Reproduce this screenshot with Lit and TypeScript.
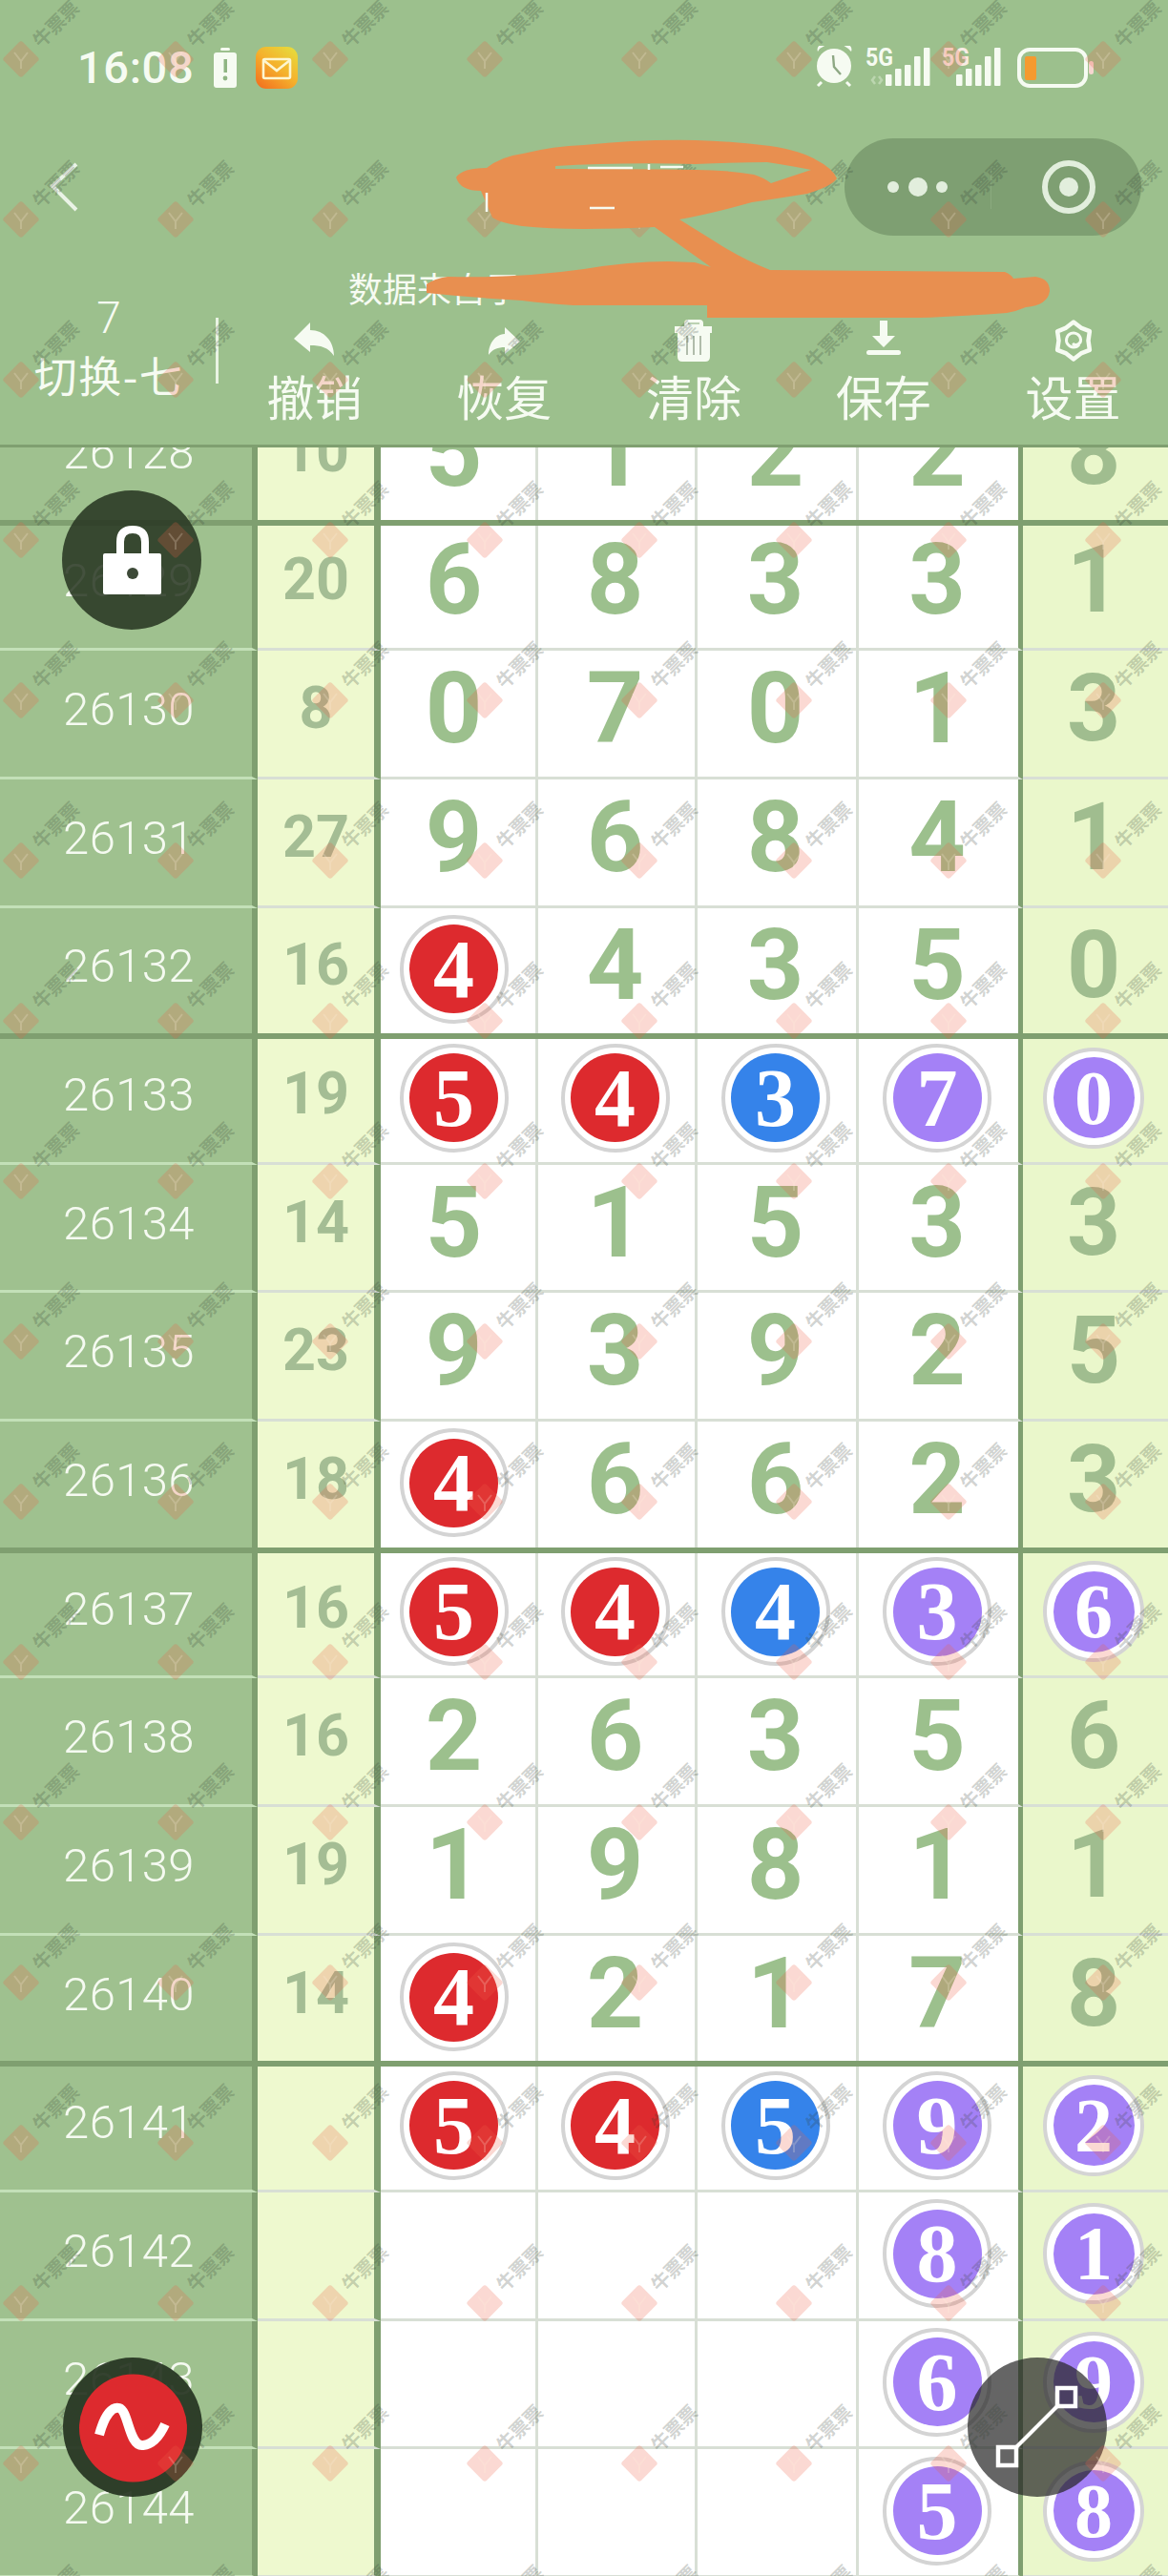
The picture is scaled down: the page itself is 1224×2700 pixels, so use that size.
import { LitElement, html, css, svg } from "lit";
import { customElement } from "lit/decorators.js";

type Ball = { v: number; c: "r" | "b" | "p" };
type Cell = number | Ball | null;
const r = (v: number): Ball => ({ v, c: "r" });
const b = (v: number): Ball => ({ v, c: "b" });
const p = (v: number): Ball => ({ v, c: "p" });

const ROWS: { id: number; sum: number | null; d: Cell[]; thick?: boolean }[] = [
  { id: 26128, sum: 10, d: [5, 1, 2, 2, 8], thick: true },
  { id: 26129, sum: 20, d: [6, 8, 3, 3, 1] },
  { id: 26130, sum: 8, d: [0, 7, 0, 1, 3] },
  { id: 26131, sum: 27, d: [9, 6, 8, 4, 1] },
  { id: 26132, sum: 16, d: [r(4), 4, 3, 5, 0], thick: true },
  { id: 26133, sum: 19, d: [r(5), r(4), b(3), p(7), p(0)] },
  { id: 26134, sum: 14, d: [5, 1, 5, 3, 3] },
  { id: 26135, sum: 23, d: [9, 3, 9, 2, 5] },
  { id: 26136, sum: 18, d: [r(4), 6, 6, 2, 3], thick: true },
  { id: 26137, sum: 16, d: [r(5), r(4), b(4), p(3), p(6)] },
  { id: 26138, sum: 16, d: [2, 6, 3, 5, 6] },
  { id: 26139, sum: 19, d: [1, 9, 8, 1, 1] },
  { id: 26140, sum: 14, d: [r(4), 2, 1, 7, 8], thick: true },
  { id: 26141, sum: null, d: [r(5), r(4), b(5), p(9), p(2)] },
  { id: 26142, sum: null, d: [null, null, null, p(8), p(1)] },
  { id: 26143, sum: null, d: [null, null, null, p(6), p(9)] },
  { id: 26144, sum: null, d: [null, null, null, p(5), p(8)] },
];

const bars = (x: number) => {
  const tops = [79, 73, 69, 60, 51];
  return tops.map(
    (t, i) => svg`<rect x=${x + i * 10} y=${t - 49} width="6.5" height=${91 - t} rx="1" fill="#f6fbf2"/>`
  );
};

const gearPoints = () => {
  const pts: string[] = [];
  for (let i = 0; i < 12; i++) {
    const a = (Math.PI / 6) * i + Math.PI / 6;
    const rad = i % 2 === 0 ? 19.5 : 15.5;
    pts.push(`${(30 + rad * Math.cos(a)).toFixed(1)},${(23 + rad * Math.sin(a)).toFixed(1)}`);
  }
  return pts.join(" ");
};

@customElement("app-root")
export class AppRoot extends LitElement {
  static styles = css`
    :host {
      display: block;
      position: relative;
      width: 1224px;
      height: 2700px;
      overflow: hidden;
      background: #fff;
      font-family: Roboto, "Noto Sans CJK SC", sans-serif;
    }
    .header {
      height: 469px;
      box-sizing: border-box;
      background: #9cc08d;
      border-bottom: 3px solid #7f9f70;
      color: #f6fbf2;
      position: relative;
      z-index: 3;
    }
    .status {
      height: 44px;
      padding: 49px 0 0 81px;
      display: flex;
      align-items: center;
    }
    .time {
      font-size: 47px;
      font-weight: 500;
      line-height: 44px;
      letter-spacing: 0.6px;
      width: 143px;
    }
    .status-mail {
      margin-left: 20px;
    }
    .status-right {
      margin-left: 543px;
    }
    .nav {
      height: 102px;
      margin-top: 52px;
      padding: 0 28px 0 50px;
      display: flex;
      align-items: center;
      justify-content: space-between;
    }
    .capsule {
      width: 311px;
      height: 102px;
      border-radius: 51px;
      background: #7e9f72;
      display: block;
    }
    .sub {
      height: 70px;
      box-sizing: border-box;
      padding: 36px 0 0 365px;
      font-family: "Noto Sans CJK SC", sans-serif;
      font-size: 36px;
      line-height: 36px;
      white-space: nowrap;
    }
    .toolbar {
      display: flex;
      height: 147px;
    }
    .switch {
      width: 226px;
      flex: none;
      text-align: center;
      box-sizing: border-box;
      padding-left: 2px;
    }
    .switch .n {
      font-size: 46px;
      font-weight: 300;
      line-height: 33px;
      height: 33px;
    }
    .switch .t {
      font-family: "Noto Sans CJK SC", sans-serif;
      font-size: 45px;
      line-height: 46px;
      margin-top: 20px;
      letter-spacing: 1.5px;
      white-space: nowrap;
    }
    .divider {
      width: 3px;
      height: 69px;
      margin: 16px 1px 0 0;
      background: #e9f3e3;
      flex: none;
    }
    .tool {
      flex: 1;
      display: flex;
      flex-direction: column;
      align-items: center;
      padding-top: 17px;
    }
    .tool svg {
      display: block;
      height: 48px;
      width: 60px;
    }
    .tool span {
      font-family: "Noto Sans CJK SC", sans-serif;
      font-size: 50px;
      line-height: 56px;
      margin-top: 4px;
      white-space: nowrap;
    }
    .table {
      height: 2231px;
      overflow: hidden;
    }
    .rows {
      margin-top: -56px;
    }
    .row {
      display: grid;
      grid-template-columns: 270px 129px 165px 167px 169px 172px 152px;
      height: 134.65px;
      position: relative;
    }
    .row.thick::after {
      content: "";
      position: absolute;
      left: 0;
      right: 0;
      bottom: -3px;
      height: 6px;
      background: #7f9f70;
      z-index: 2;
    }
    .cell {
      box-sizing: border-box;
      display: flex;
      align-items: center;
      justify-content: center;
      border-bottom: 3px solid #d8dfd5;
      line-height: 1;
      min-width: 0;
    }
    .label {
      background: #9fc18f;
      color: #f5faf1;
      font-size: 49px;
      font-weight: 300;
      letter-spacing: 0.4px;
      border-right: 6px solid #7f9f70;
      border-bottom-color: #c3e0b8;
      padding: 0 0 9px 6px;
    }
    .sum {
      background: #eef9cf;
      color: #a4bd94;
      font-size: 61px;
      font-weight: 700;
      border-right: 7px solid #7f9f70;
      padding-bottom: 11px;
    }
    .d {
      background: #fff;
      color: #9cc08d;
      font-size: 104px;
      font-weight: 700;
      border-right: 3px solid #d8dfd5;
      padding: 0 3px 10px 0;
    }
    .d.first {
      padding-right: 9px;
    }
    .d.last {
      border-right: 5px solid #7f9f70;
    }
    .d.extra {
      background: #eaf7cb;
      color: #a0bd8f;
      font-size: 98px;
      border-right: 0;
      padding-right: 4px;
    }
    .cell.has-ball {
      padding-bottom: 3px;
    }
    .ball {
      width: 114px;
      height: 114px;
      box-sizing: border-box;
      border-radius: 50%;
      border: 4px solid #d4d4d4;
      background: #fff;
      display: flex;
      align-items: center;
      justify-content: center;
      flex: none;
    }
    .ball i {
      width: 93px;
      height: 93px;
      border-radius: 50%;
      display: flex;
      align-items: center;
      justify-content: center;
      font-family: "Liberation Serif", serif;
      font-style: normal;
      font-weight: 700;
      font-size: 86px;
      line-height: 1;
      color: #fff;
    }
    .extra .ball {
      width: 106px;
      height: 106px;
    }
    .extra .ball i {
      width: 85px;
      height: 85px;
      font-size: 80px;
    }
    .ball .r {
      background: #dd2a2e;
    }
    .ball .b {
      background: #3583ea;
    }
    .ball .p {
      background: #a481f6;
    }
    .fab {
      position: absolute;
      width: 146px;
      height: 146px;
      border-radius: 50%;
      z-index: 4;
    }
    .fab svg {
      display: block;
    }
    .lock {
      left: 65px;
      top: 514px;
      background: rgba(38, 52, 33, 0.86);
    }
    .wave {
      left: 66px;
      top: 2471px;
      background: rgba(38, 52, 33, 0.93);
    }
    .link {
      left: 1014px;
      top: 2471px;
      background: rgba(35, 35, 35, 0.7);
    }
    .marks {
      position: absolute;
      inset: 0;
      display: grid;
      grid-template-columns: repeat(8, 162px);
      grid-auto-rows: 168px;
      pointer-events: none;
      z-index: 5;
    }
    .mark {
      position: relative;
    }
    .mark svg {
      position: absolute;
      left: 0;
      top: 40px;
    }
    .mark span {
      position: absolute;
      left: 28px;
      top: 12px;
      width: 60px;
      text-align: center;
      font-family: "Noto Sans CJK SC", sans-serif;
      font-weight: 700;
      font-size: 20px;
      line-height: 26px;
      letter-spacing: -0.5px;
      color: rgba(50, 62, 50, 0.24);
      transform: rotate(-45deg);
      white-space: nowrap;
    }
    .scribble {
      position: absolute;
      left: 0;
      top: 0;
      z-index: 6;
      pointer-events: none;
    }
  `;

  private cell(c: Cell, i: number) {
    const cls = `cell d ${i === 0 ? "first" : ""} ${i === 3 ? "last" : ""} ${i === 4 ? "extra" : ""}`;
    if (c === null) return html`<div class=${cls}></div>`;
    if (typeof c === "number") return html`<div class=${cls}>${c}</div>`;
    return html`<div class="${cls} has-ball"><div class="ball"><i class=${c.c}>${c.v}</i></div></div>`;
  }

  render() {
    const marks = Array.from({ length: 8 * 17 });
    return html`
      <div class="header">
        <div class="status">
          <div class="time">16:08</div>
          <svg width="24" height="42" viewBox="0 0 24 42">
            <rect x="7" y="0" width="10" height="3" rx="1.5" fill="#f6fbf2" />
            <rect x="0" y="5" width="24" height="37" rx="3" fill="#f6fbf2" />
            <rect x="10.5" y="12" width="3.5" height="14" fill="#8fb583" />
            <circle cx="12" cy="32" r="2.4" fill="#8fb583" />
          </svg>
          <svg class="status-mail" width="44" height="44" viewBox="0 0 44 44">
            <defs>
              <linearGradient id="mailg" x1="0.9" y1="0" x2="0.1" y2="1">
                <stop offset="0" stop-color="#e6dc3c" />
                <stop offset="0.5" stop-color="#f5b02c" />
                <stop offset="1" stop-color="#f2701f" />
              </linearGradient>
            </defs>
            <rect width="44" height="44" rx="11" fill="url(#mailg)" />
            <rect x="8" y="13" width="28" height="20" rx="1.5" fill="none" stroke="#fdf6d0" stroke-width="2.6" />
            <path d="M8 14 L22 25 L36 14" fill="none" stroke="#fdf6d0" stroke-width="2.6" />
          </svg>
          <svg class="status-right" width="294" height="46" viewBox="0 0 294 46">
            <g transform="translate(-2,-2)">
              <path d="M6 5 L13 1 A6 6 0 0 0 4 8 Z M36 5 L30 1 A6 6 0 0 1 39 8 Z" fill="#f6fbf2" />
              <circle cx="21" cy="23" r="18" fill="#f6fbf2" />
              <path d="M8 40 L4 44 M34 40 L38 44" stroke="#f6fbf2" stroke-width="3" />
              <path d="M20 12 L21 24 L28 32" fill="none" stroke="#8ea884" stroke-width="2.4" />
            </g>
            <text x="52" y="21" font-family="Roboto, sans-serif" font-weight="700" font-size="26" textLength="29" lengthAdjust="spacingAndGlyphs" fill="#f6fbf2">5G</text>
            <path d="M62 32 l-3 4 l3 4 M66 32 l3 4 l-3 4" fill="none" stroke="#bcd6b0" stroke-width="2.5" />
            ${bars(73)}
            <text x="132" y="21" font-family="Roboto, sans-serif" font-weight="700" font-size="26" textLength="29" lengthAdjust="spacingAndGlyphs" fill="#f8ece4">5G</text>
            ${bars(147)}
            <rect x="213" y="4" width="70" height="38" rx="11" fill="none" stroke="#f6fbf2" stroke-width="4" />
            <rect x="219" y="11" width="12" height="25" rx="2" fill="#f59a2f" />
            <rect x="286" y="16" width="5" height="14" rx="2.5" fill="#f6d6d0" />
          </svg>
        </div>
        <div class="nav">
          <svg width="34" height="52" viewBox="0 0 34 52">
            <path d="M30 2 L5 25 L30 50" fill="none" stroke="#eaf3e6" stroke-width="4" />
          </svg>
          <svg class="capsule" width="311" height="102" viewBox="0 0 311 102">
            <circle cx="51" cy="51" r="6" fill="#e2eedd" />
            <circle cx="77" cy="51" r="10" fill="#e2eedd" />
            <circle cx="102" cy="51" r="6" fill="#e2eedd" />
            <path d="M153.500 30 V74" stroke="#8aa97e" stroke-width="1" />
            <circle cx="235" cy="51" r="25" fill="none" stroke="#e2eedd" stroke-width="6" />
            <circle cx="235" cy="51" r="10" fill="#e2eedd" />
          </svg>
        </div>
        <div class="sub">数据来自于</div>
        <div class="toolbar">
          <div class="switch">
            <div class="n">7</div>
            <div class="t">切换-七</div>
          </div>
          <div class="divider"></div>
          <div class="tool">
            <svg viewBox="0 0 60 48">
              <path d="M9 21 L26 4 L26 12 C41 12 51 24 51 39 C45 30 37 28 26 28 L26 35 Z" fill="#f6fbf2" />
            </svg>
            <span>撤销</span>
          </div>
          <div class="tool">
            <svg viewBox="0 0 60 48">
              <path d="M47 24 L31 9 L31 16 C19 17 14 28 14 38 C18 32 24 30 31 30 L31 37 Z" fill="#f6fbf2" />
            </svg>
            <span>恢复</span>
          </div>
          <div class="tool">
            <svg viewBox="0 0 60 48">
              <path d="M20 5 Q20 1 24 1 H36 Q40 1 40 5 V8 H49 V15 H47 V40 Q47 45 42 45 H18 Q13 45 13 40 V15 H10 V8 H20 Z" fill="#f6fbf2" />
              <path d="M24 5 H36" stroke="#a9c59c" stroke-width="1.500" />
              <path d="M23 18 V38 M30 18 V38 M37 18 V38" stroke="#a9b5a3" stroke-width="1.800" />
            </svg>
            <span>清除</span>
          </div>
          <div class="tool">
            <svg viewBox="0 0 60 48">
              <path d="M26 2 H34 V18 H42 L30 30 L18 18 H26 Z" fill="#f6fbf2" />
              <rect x="12" y="33" width="36" height="5" rx="2.500" fill="#f6fbf2" />
            </svg>
            <span>保存</span>
          </div>
          <div class="tool">
            <svg viewBox="0 0 60 48">
              <polygon points=${gearPoints()} fill="none" stroke="#f6fbf2" stroke-width="4.500" stroke-linejoin="round" />
              <path d="M36 27 A7.500 7.500 0 1 1 37.500 22 A5 5 0 0 1 29 26" fill="none" stroke="#f6fbf2" stroke-width="3" />
            </svg>
            <span>设置</span>
          </div>
        </div>
      </div>

      <div class="table">
        <div class="rows">
          ${ROWS.map(
            (row) => html`
              <div class="row ${row.thick ? "thick" : ""}">
                <div class="cell label">${row.id}</div>
                <div class="cell sum">${row.sum ?? ""}</div>
                ${row.d.map((c, i) => this.cell(c, i))}
              </div>
            `
          )}
        </div>
      </div>

      <div class="fab lock">
        <svg width="146" height="146" viewBox="0 0 146 146">
          <path d="M61 68 V54 Q61 41 74 41 Q87 41 87 54 V68" fill="none" stroke="#fff" stroke-width="8" />
          <rect x="43" y="66" width="61" height="43" rx="2" fill="#fff" />
          <circle cx="74" cy="87" r="6" fill="#3d4a38" />
        </svg>
      </div>
      <div class="fab wave">
        <svg width="146" height="146" viewBox="0 0 146 146">
          <circle cx="73.500" cy="74" r="56.500" fill="#dd2a2e" />
          <path d="M38 81 C44 59 52 51 59 53 C69 56 69 94 84 92 C94 91 102 81 107 70" fill="none" stroke="#fff" stroke-width="10" />
        </svg>
      </div>
      <div class="fab link">
        <svg width="146" height="146" viewBox="0 0 146 146">
          <rect x="32" y="94" width="19" height="19" fill="none" stroke="#fff" stroke-width="4.500" />
          <rect x="94" y="32" width="19" height="19" fill="none" stroke="#fff" stroke-width="4.500" />
          <path d="M51 94 L94 51" stroke="#fff" stroke-width="4" />
        </svg>
      </div>

      <div class="marks">
        ${marks.map(
          () => html`<div class="mark">
            <svg width="44" height="44" viewBox="0 0 44 44">
              <rect x="8" y="8" width="28" height="28" rx="3" transform="rotate(45 22 22)" fill="rgba(240,95,70,0.24)" />
              <path d="M15 15 L22 24 L29 15 M22 24 V32" fill="none" stroke="rgba(255,240,225,0.22)" stroke-width="2" />
            </svg>
            <span>牛票票</span>
          </div>`
        )}
      </div>

      <svg class="scribble" width="1224" height="340" viewBox="0 0 1224 340">
        <path fill-rule="evenodd" fill="#e88f50"
          d="M478 186 Q484 176 510 176 Q525 164 548 161 Q580 153 612 152 Q670 146 729 147 Q770 148 807 153 Q840 158 856 168 Q872 176 877 187 Q872 195 846 203 Q815 208 788 212 Q745 224 712 230 L749 253 Q778 272 807 283 L1053 285 Q1060 288 1062 292 L1085 290 Q1100 292 1100 305 Q1098 320 1075 322 Q1066 326 1055 328 Q1000 332 963 333 L741 333 L741 320 L601 320 Q570 318 547 315 Q495 312 447 307 L447 298 Q455 292 469 290 Q540 292 612 282 Q660 274 700 274 L728 275 L745 280 L686 238 Q650 240 612 240 Q575 240 547 237 Q525 234 516 228 Q510 214 504 200 Q482 200 478 186 Z
             M582 174 Q650 170 729 172 Q775 170 804 170 Q830 174 850 178 L808 192 Q800 186 790 183 Q760 178 729 178 Q650 177 582 177 Z" />
        <path d="M616 176 H663 M680 172 V178 M692 175 H716 M618 218 H644 M510 202 V222" stroke="#f6fbf2" stroke-width="2.500" fill="none" />
      </svg>
    `;
  }
}
